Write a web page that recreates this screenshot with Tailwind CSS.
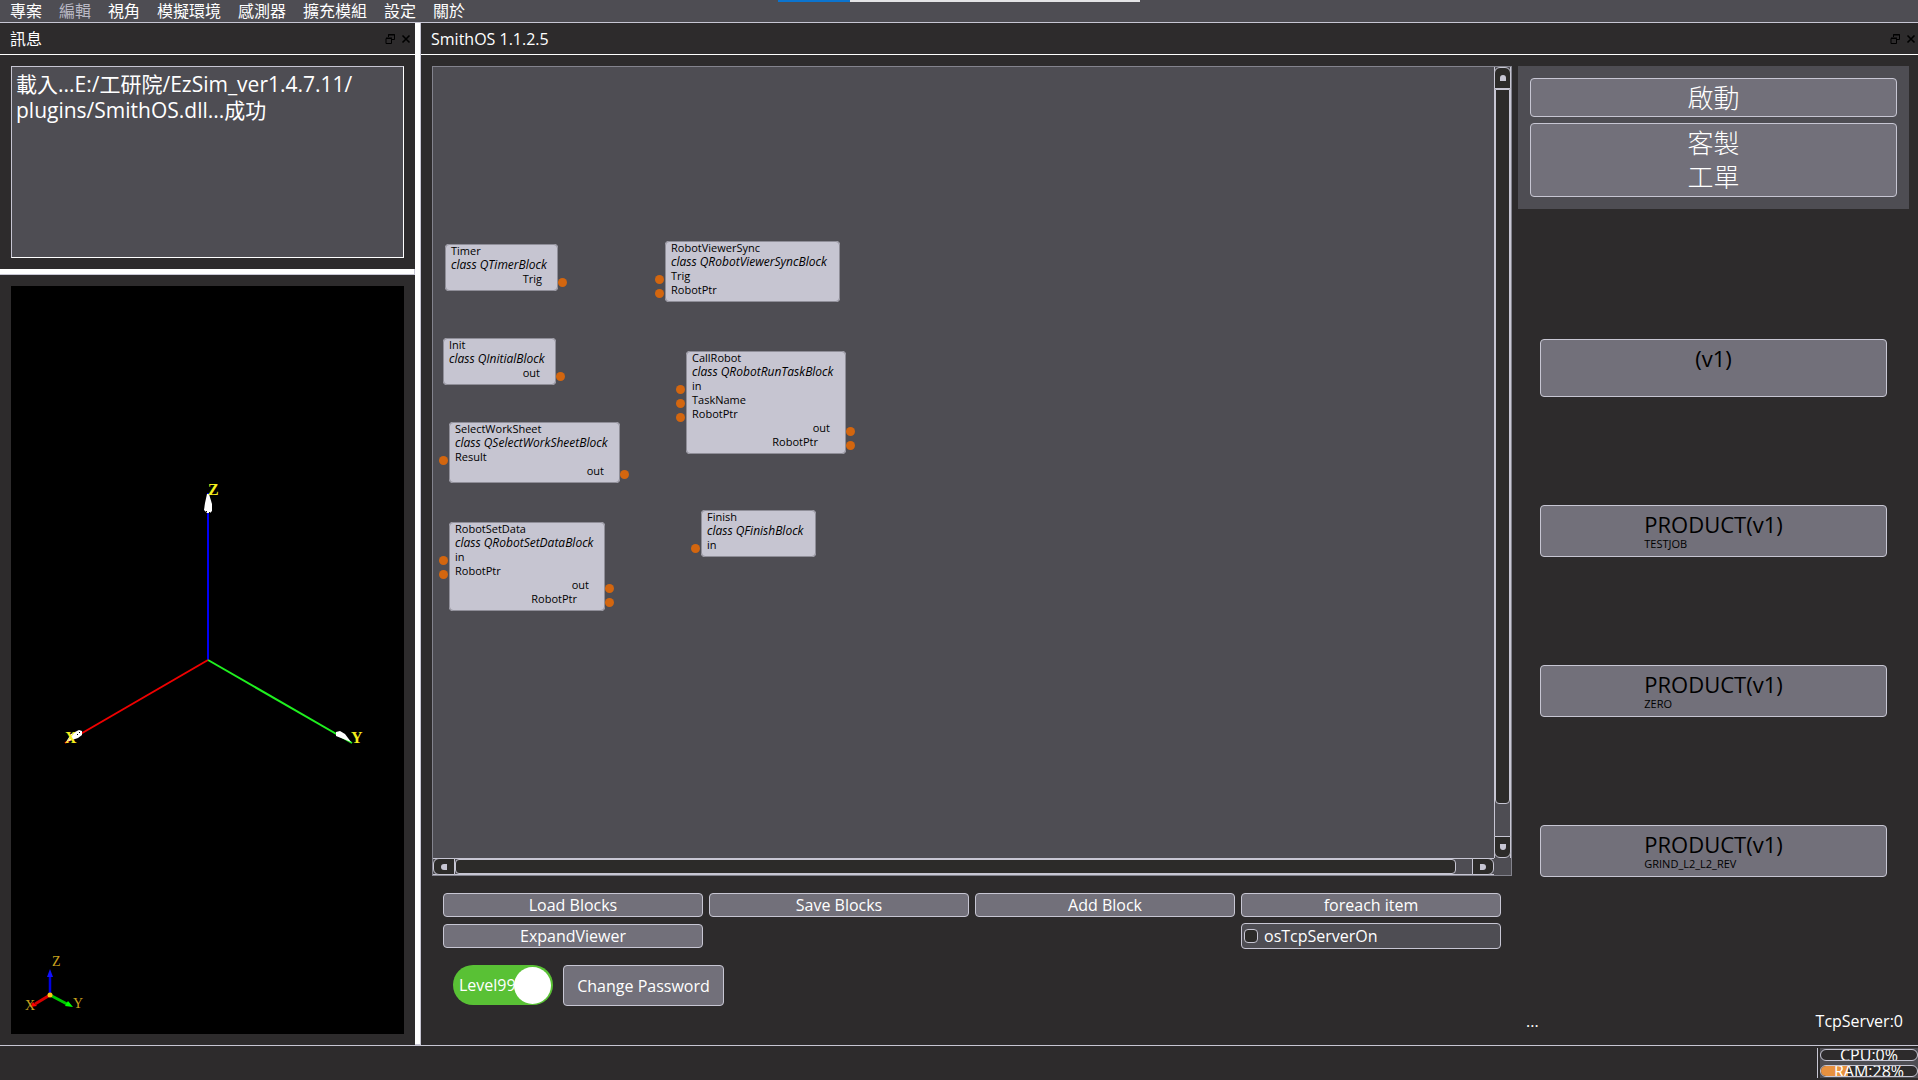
<!DOCTYPE html>
<html lang="zh-Hant">
<head>
<meta charset="utf-8">
<title>SmithOS 1.1.2.5</title>
<script src="https://cdn.jsdelivr.net/npm/@tailwindcss/browser@4"></script>
</head>
<body class="flex min-h-screen flex-col overflow-x-hidden bg-[#2d2b2c] font-['Open_Sans','Noto_Sans_CJK_TC',sans-serif] text-base leading-5 text-white">

<header class="relative flex h-[23px] shrink-0 items-center border-b border-[#c7c6d3] bg-[#4e4d53] px-2.5">
  <nav class="flex gap-[17px]">
    <button>專案</button>
    <button class="text-[#b9b8c4]" disabled>編輯</button>
    <button>視角</button>
    <button>模擬環境</button>
    <button>感測器</button>
    <button>擴充模組</button>
    <button>設定</button>
    <button>關於</button>
  </nav>
  <div class="absolute left-1/2 top-0 flex h-0.5 w-[362px] -translate-x-1/2 bg-[#e4e4e6]">
    <div class="w-1/5 bg-[#0b74cf]"></div>
  </div>
</header>

<main class="flex grow">
  <aside class="flex w-[415px] shrink-0 flex-col">
    <div class="flex h-8 items-center border-b border-white pl-2.5 pr-1">
      <h2 class="grow">訊息</h2>
      <div class="flex gap-1.5">
        <button aria-label="Float"><svg class="size-2.5" viewBox="0 0 10 10" fill="none" stroke="#000" stroke-width="1"><path d="M3.5 3V.5h6v5H7M3 1h7M1 4h6"/><path d="M1 4.5h5.500v5H1z"/></svg></button>
        <button aria-label="Close"><svg class="size-2.5" viewBox="0 0 10 10" fill="none" stroke="#000" stroke-width="1.600"><path d="M1.500 1.500l7 7M8.500 1.500l-7 7"/></svg></button>
      </div>
    </div>
    <div class="px-[11px] pb-[11px] pt-[11px]">
      <div class="h-[192px] border border-white border-l-[#c7c6d3] border-t-[#c7c6d3] bg-[#4e4d53] px-1 py-1 text-[21px] leading-[26px]">載入...E:/工研院/EzSim_ver1.4.7.11/<br>plugins/SmithOS.dll...成功</div>
    </div>
    <div class="h-1.5 border-b border-r border-[#c7c6d3] bg-white"></div>
    <div class="flex grow flex-col p-[11px]">
      <div class="relative flex grow items-center justify-center bg-black">
        <svg class="h-[360px] w-[392px]" viewBox="-196 -180 392 360" font-family="Liberation Serif, serif" font-size="16" font-weight="bold" fill="#f4ee1c">
          <path d="M0 0V-167" stroke="#0000f5" stroke-width="2"/>
          <path d="M0 0L-143 83" stroke="#f00000" stroke-width="2"/>
          <path d="M0 0L144 83" stroke="#1ff01f" stroke-width="2"/>
          <path d="M1-166l3 10v7l-2 2h-3l-3-3 1-7 2-9z" fill="#fff"/>
          <path d="M-142 82l5-8 8-4 3 1v4l-4 3z" fill="#fff"/>
          <path d="M143 82l-15-6v-4l4-1 5 3z" fill="#fff"/>
          <g fill="#000"><path d="M-2-149h1v1h-1zM1-148h1v1h-1z"/><path d="M-131 74h1v1h-1zM-129 72h1v1h-1z"/></g>
          <text x="0" y="-165">Z</text>
          <text x="-143" y="83">X</text>
          <text x="143" y="83">Y</text>
        </svg>
        <svg class="absolute bottom-4 left-3 size-16" viewBox="0 0 64 64" font-family="Liberation Serif, serif" font-size="14" fill="#c9a21e">
          <path d="M27 41V22" stroke="#0000e0" stroke-width="2.500"/>
          <path d="M27 15l3 8h-6z" fill="#1010ff"/>
          <path d="M27 41L12 50" stroke="#d80000" stroke-width="3"/>
          <path d="M7 53l3-5 4 4z" fill="#f00"/>
          <path d="M27 41L44 50" stroke="#00c800" stroke-width="3"/>
          <path d="M50 53l-8-1 3-5z" fill="#0f0"/>
          <circle cx="27" cy="41" r="2.500" fill="#ffc814"/>
          <text x="29" y="12">Z</text>
          <text x="50" y="54">Y</text>
          <text x="2" y="56">X</text>
        </svg>
      </div>
    </div>
  </aside>
  <div class="w-1.5 shrink-0 border-b border-r border-[#c7c6d3] bg-white"></div>

  <section class="flex min-w-0 grow flex-col">
    <div class="flex h-8 items-center border-b border-white pl-2.5 pr-0.5">
      <h2 class="grow">SmithOS 1.1.2.5</h2>
      <div class="flex gap-1.5">
        <button aria-label="Float"><svg class="size-2.5" viewBox="0 0 10 10" fill="none" stroke="#000" stroke-width="1"><path d="M3.5 3V.5h6v5H7M3 1h7M1 4h6"/><path d="M1 4.500h5.500v5H1z"/></svg></button>
        <button aria-label="Close"><svg class="size-2.5" viewBox="0 0 10 10" fill="none" stroke="#000" stroke-width="1.600"><path d="M1.500 1.500l7 7M8.500 1.500l-7 7"/></svg></button>
      </div>
    </div>

    <div class="flex grow gap-1.5 pl-[11px] pr-[9px] pt-[11px]">
      <div class="flex min-w-0 grow flex-col">
        <div class="grid h-[810px] grid-cols-[1fr_17px] grid-rows-[1fr_17px] border border-[#83838d] bg-[#4e4d53]">
          <div id="canvas" class="relative overflow-hidden text-[11px] leading-[14px] text-black"></div>
          <div class="flex flex-col border-x border-[#c7c6d3]">
            <button aria-label="Scroll up" class="-mx-px flex h-[22px] items-center justify-center rounded-t-md border border-[#c7c6d3] bg-[#2c2b29]"><span class="size-1.5 rounded-t-full bg-[#c7c6d3]"></span></button>
            <div class="h-[715px] rounded-b border border-[#c7c6d3] bg-[#2c2b29]"></div>
            <div class="grow"></div>
            <button aria-label="Scroll down" class="-mx-px flex h-[22px] items-center justify-center rounded-b-md border border-[#c7c6d3] bg-[#2c2b29]"><span class="size-1.5 rounded-b-full bg-[#c7c6d3]"></span></button>
          </div>
          <div class="flex border-y border-[#c7c6d3]">
            <button aria-label="Scroll left" class="-my-px flex w-[22px] items-center justify-center rounded-l-md border border-[#c7c6d3] bg-[#2c2b29]"><span class="size-1.5 rounded-l-full bg-[#c7c6d3]"></span></button>
            <div class="grow rounded border border-[#c7c6d3] bg-[#2c2b29]"></div>
            <div class="w-4"></div>
            <button aria-label="Scroll right" class="-my-px flex w-[22px] items-center justify-center rounded-r-md border border-[#c7c6d3] bg-[#2c2b29]"><span class="size-1.5 rounded-r-full bg-[#c7c6d3]"></span></button>
          </div>
          <div></div>
        </div>

        <div class="mx-[11px] mt-[17px] grid grid-cols-4 items-center gap-x-1.5 gap-y-1.5">
          <button class="h-6 rounded border border-[#c7c6d3] bg-[#72707a]">Load Blocks</button>
          <button class="h-6 rounded border border-[#c7c6d3] bg-[#72707a]">Save Blocks</button>
          <button class="h-6 rounded border border-[#c7c6d3] bg-[#72707a]">Add Block</button>
          <button class="h-6 rounded border border-[#c7c6d3] bg-[#72707a]">foreach item</button>
          <button class="h-6 rounded border border-[#c7c6d3] bg-[#72707a]">ExpandViewer</button>
          <label class="col-start-4 flex h-[26px] items-center gap-1.5 rounded border border-[#c7c6d3] bg-[#4e4d53] pl-0.5"><input type="checkbox" class="size-3.5 appearance-none rounded border border-[#c7c6d3] bg-[#2c2b29]">osTcpServerOn</label>
        </div>

        <div class="ml-[21px] mt-4 flex items-start gap-2.5">
          <button role="switch" aria-checked="true" class="relative flex h-10 w-[100px] items-center rounded-full bg-[#59c135] pl-1.5">Level99<span class="absolute right-0.5 size-[37px] rounded-full bg-white"></span></button>
          <button class="h-[41px] w-[161px] rounded border border-[#c7c6d3] bg-[#72707a]">Change Password</button>
        </div>
      </div>

      <div class="flex w-[391px] shrink-0 flex-col">
        <div class="flex flex-col gap-1.5 bg-[#4e4d53] p-3 text-[26px] font-light leading-[34px]">
          <button class="h-[39px] rounded border border-[#c7c6d3] bg-[#72707a]">啟動</button>
          <button class="h-[74px] rounded border border-[#c7c6d3] bg-[#72707a]">客製<br>工單</button>
        </div>
        <div class="mx-[22px] mt-[130px] flex flex-col gap-[108px] text-[22px] leading-7 text-black">
          <button class="flex h-[58px] justify-center rounded border border-[#c7c6d3] bg-[#72707a] pt-1">(v1)</button>
          <button class="flex h-[52px] flex-col items-center rounded border border-[#c7c6d3] bg-[#72707a] pt-1 text-left"><span><span class="block">PRODUCT(v1)</span><span class="block text-[11px] leading-3">TESTJOB</span></span></button>
          <button class="flex h-[52px] flex-col items-center rounded border border-[#c7c6d3] bg-[#72707a] pt-1 text-left"><span><span class="block">PRODUCT(v1)</span><span class="block text-[11px] leading-3">ZERO</span></span></button>
          <button class="flex h-[52px] flex-col items-center rounded border border-[#c7c6d3] bg-[#72707a] pt-1 text-left"><span><span class="block">PRODUCT(v1)</span><span class="block text-[11px] leading-3">GRIND_L2_L2_REV</span></span></button>
        </div>
        <div class="mt-auto flex justify-between pb-3.5 pl-2 pr-1.5">
          <span>...</span>
          <span>TcpServer:0</span>
        </div>
      </div>
    </div>
  </section>
</main>

<footer class="flex h-[35px] shrink-0 justify-end border-t border-[#c7c6d3] pt-0.5">
  <div class="flex h-[30px] gap-0.5">
    <div class="w-px bg-[#c7c6d3]"></div>
    <div class="flex w-[98px] flex-col justify-between bg-[#4e4d53] py-px">
      <div class="relative flex h-3 items-center justify-center overflow-hidden rounded-md border border-[#c7c6d3] bg-[#2d2b2c]"><span>CPU:0%</span></div>
      <div class="relative flex h-3 items-center justify-center overflow-hidden rounded-md border border-[#c7c6d3] bg-[#2d2b2c]"><div class="absolute inset-y-0 left-0 bg-[#e8913f]" style="width:28%"></div><span class="relative">RAM:28%</span></div>
    </div>
  </div>
</footer>

<script>
const blocks = [
  { name: 'Timer', type: 'QTimerBlock', x: 12, y: 177, w: 113, inputs: [], outputs: ['Trig'] },
  { name: 'Init', type: 'QInitialBlock', x: 10, y: 271, w: 113, inputs: [], outputs: ['out'] },
  { name: 'SelectWorkSheet', type: 'QSelectWorkSheetBlock', x: 16, y: 355, w: 171, inputs: ['Result'], outputs: ['out'] },
  { name: 'RobotSetData', type: 'QRobotSetDataBlock', x: 16, y: 455, w: 156, inputs: ['in', 'RobotPtr'], outputs: ['out', 'RobotPtr'] },
  { name: 'RobotViewerSync', type: 'QRobotViewerSyncBlock', x: 232, y: 174, w: 175, inputs: ['Trig', 'RobotPtr'], outputs: [] },
  { name: 'CallRobot', type: 'QRobotRunTaskBlock', x: 253, y: 284, w: 160, inputs: ['in', 'TaskName', 'RobotPtr'], outputs: ['out', 'RobotPtr'] },
  { name: 'Finish', type: 'QFinishBlock', x: 268, y: 443, w: 115, inputs: ['in'], outputs: [] },
];
document.getElementById('canvas').innerHTML = blocks.map(b => `
  <div class="absolute rounded bg-[#c6c5d1] px-1.5 pb-[5px] whitespace-nowrap outline outline-1 -outline-offset-1 outline-[#8f8e98]" style="left:${b.x}px;top:${b.y}px;width:${b.w}px">
    <div class="font-medium">${b.name}</div>
    <div class="text-xs leading-[14px] italic">class ${b.type}</div>
    ${b.inputs.map(t => `<div class="relative">${t}<span class="absolute -left-4 top-[6px] size-[9px] rounded-full bg-[#d3660f]"></span></div>`).join('')}
    ${b.outputs.map(t => `<div class="relative text-right ${t.length > 4 ? 'pr-[22px]' : 'pr-2.5'}">${t}<span class="absolute -right-[15px] top-[6px] size-[9px] rounded-full bg-[#d3660f]"></span></div>`).join('')}
  </div>`).join('');
</script>
</body>
</html>
